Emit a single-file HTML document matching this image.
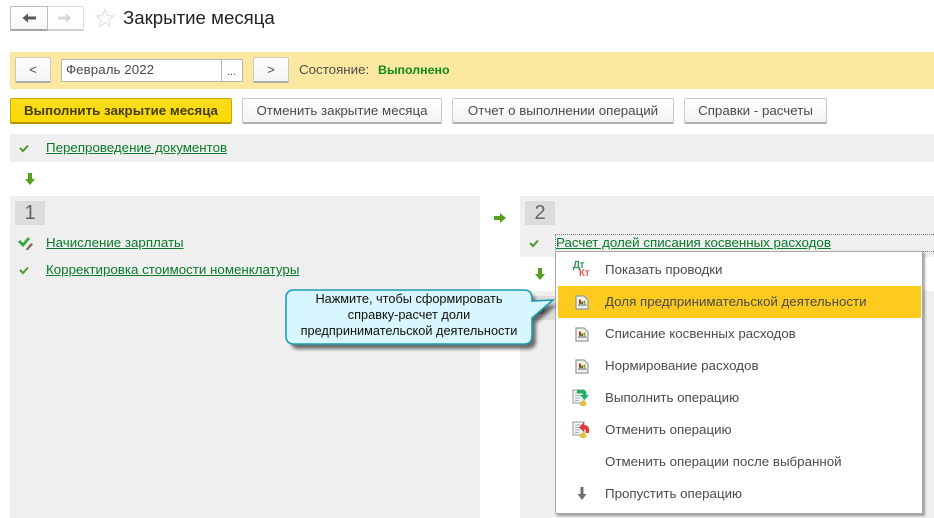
<!DOCTYPE html>
<html lang="ru"><head><meta charset="utf-8"><style>
html,body{margin:0;padding:0;background:#fff}
#p{position:relative;width:934px;height:518px;overflow:hidden;font-family:"Liberation Sans",Arial,sans-serif;font-size:13.33px;color:#4b4b4b;background:#fff}
#p div,#p svg,#p a{position:absolute;box-sizing:border-box}
.t{white-space:nowrap;line-height:16px}
.g{background:#efefef}
.btn{background:linear-gradient(#fff,#f3f3f3);border:1px solid #c8c8c8;border-bottom:2px solid #b0b0b0;border-radius:2px;text-align:center;white-space:nowrap;line-height:24px;color:#4b4b4b}
.l{color:#0a7a2c;text-decoration:underline;white-space:nowrap;line-height:16px}
.m{left:605px;white-space:nowrap;line-height:16px;color:#4b4b4b}
</style></head><body><div id="p">

<div style="left:10px;top:6px;width:74px;height:25px;border:1px solid #dcdcdc;border-bottom:2px solid #d0d0d0;border-radius:2px;background:#fff"></div>
<div style="left:10px;top:6px;width:38px;height:25px;border:1px solid #bdbdbd;border-bottom:2px solid #a5a5a5;border-radius:2px 0 0 2px;background:linear-gradient(#fff,#f6f6f6)"></div>
<svg style="left:21px;top:12px" width="16" height="12"><path d="M1.500 6L7 1.500V4.500H15V7.500H7V10.500Z" fill="#585858"/></svg>
<svg style="left:57px;top:12px" width="16" height="12"><path d="M14.500 6L9 1.500V4.500H1V7.500H9V10.500Z" fill="#d8d8d8"/></svg>
<svg style="left:95px;top:8px" width="20" height="20"><path d="M10 1.500L12.400 7.600L18.600 8L13.800 12.100L15.400 18.400L10 15L4.600 18.400L6.200 12.100L1.400 8L7.600 7.600Z" fill="#fff" stroke="#e2e2e2" stroke-width="1.200"/></svg>
<div class="t" style="left:123px;top:8px;font-size:18.67px;line-height:20px;color:#222">Закрытие месяца</div>

<div style="left:10px;top:52px;width:924px;height:37px;background:#fce8a0"></div>
<div class="btn" style="left:15px;top:57px;width:36px;height:26px">&lt;</div>
<div style="left:61px;top:59px;width:182px;height:23px;background:#fff;border:1px solid #b5b5b5;border-radius:2px"></div>
<div style="left:221px;top:59px;width:1px;height:23px;background:#b5b5b5"></div>
<div class="t" style="left:66px;top:62px;letter-spacing:.05px">Февраль 2022</div>
<div class="t" style="left:227px;top:64px;font-size:11px">...</div>
<div class="btn" style="left:253px;top:57px;width:36px;height:26px">&gt;</div>
<div class="t" style="left:299px;top:62px">Состояние:</div>
<div class="t" style="left:378px;top:62px;font-weight:bold;color:#108a1c;font-size:12.4px">Выполнено</div>

<div class="btn" style="left:10px;top:98px;width:222px;height:26px;background:linear-gradient(#f9dc1e,#fbd900);border-color:#c9a800;border-bottom-color:#b39600;font-weight:bold;color:#443d10">Выполнить закрытие месяца</div>
<div class="btn" style="left:242px;top:98px;width:200px;height:26px">Отменить закрытие месяца</div>
<div class="btn" style="left:452px;top:98px;width:222px;height:26px">Отчет о выполнении операций</div>
<div class="btn" style="left:684px;top:98px;width:143px;height:26px">Справки - расчеты</div>

<div class="g" style="left:10px;top:134px;width:924px;height:28px"></div>
<svg style="left:19px;top:144px" width="10" height="9"><path d="M1 4L4 7L9 1.500" fill="none" stroke="#4f9a2a" stroke-width="2"/></svg>
<a class="l" style="left:46px;top:140px">Перепроведение документов</a>
<svg style="left:24px;top:172px" width="12" height="14"><path d="M4 1H8V7H11L6 13L1 7H4Z" fill="#55a11f"/></svg>

<div class="g" style="left:10px;top:196px;width:470px;height:322px"></div>
<div style="left:15px;top:201px;width:30px;height:24px;background:#dcdcdc;color:#666;font-size:20px;line-height:24px;text-align:center">1</div>
<svg style="left:18px;top:236px" width="16" height="14"><path d="M1 5L5 9L11 2" fill="none" stroke="#2fa83a" stroke-width="2.800"/><path d="M8 13L13 7L15 8.500L10 14H8Z" fill="#8a6a50"/></svg>
<a class="l" style="left:46px;top:235px">Начисление зарплаты</a>
<svg style="left:19px;top:266px" width="10" height="9"><path d="M1 4L4 7L9 1.500" fill="none" stroke="#4f9a2a" stroke-width="2"/></svg>
<a class="l" style="left:46px;top:262px">Корректировка стоимости номенклатуры</a>

<svg style="left:493px;top:212px" width="14" height="12"><path d="M1 4H7V1L13 6L7 11V8H1Z" fill="#55a11f"/></svg>
<div class="g" style="left:520px;top:196px;width:414px;height:61px"></div>
<div style="left:525px;top:201px;width:30px;height:24px;background:#dcdcdc;color:#666;font-size:20px;line-height:24px;text-align:center">2</div>
<svg style="left:529px;top:239px" width="10" height="9"><path d="M1 4L4 7L9 1.500" fill="none" stroke="#4f9a2a" stroke-width="2"/></svg>
<div style="left:555px;top:234px;width:379px;height:18px;border:1px dotted #777;border-right:0"></div>
<a class="l" style="left:556px;top:235px">Расчет долей списания косвенных расходов</a>
<svg style="left:534px;top:267px" width="12" height="14"><path d="M4 1H8V7H11L6 13L1 7H4Z" fill="#55a11f"/></svg>
<div class="g" style="left:520px;top:291px;width:414px;height:227px"></div>
<div style="left:525px;top:296px;width:30px;height:24px;background:#dcdcdc;color:#666;font-size:20px;line-height:24px;text-align:center">3</div>

<div style="left:555px;top:251px;width:368px;height:263px;background:#fff;border:1px solid #a8a8a8;box-shadow:2px 2px 2px rgba(0,0,0,.35)"></div>
<div style="left:558px;top:286px;width:363px;height:32px;background:#fccb1e"></div>

<div class="t" style="left:573px;top:261px;font-size:10px;line-height:10px;color:#1e8a4a;-webkit-text-stroke:.3px #1e8a4a">Дт</div>
<div class="t" style="left:579px;top:269px;font-size:10px;line-height:10px;color:#e8534a;-webkit-text-stroke:.3px #e8534a">Кт</div>
<div class="m" style="top:262px">Показать проводки</div>

<svg style="left:575px;top:295px" width="14" height="15"><path d="M1 1H9L13 5V14H1Z" fill="#f2f2ea" stroke="#8f9a9f" stroke-width="1.200"/><path d="M4 4.500h2v4.500H4z" fill="#d93030"/><path d="M6 6.500h2v2.500H6z" fill="#2a9a35"/><path d="M8.500 5.500h1.800v3.500H8.500z" fill="#b8902a"/><path d="M3 9.500h8.500v1H3z" fill="#555"/></svg>
<div class="m" style="top:294px">Доля предпринимательской деятельности</div>

<svg style="left:575px;top:327px" width="14" height="15"><path d="M1 1H9L13 5V14H1Z" fill="#f2f2ea" stroke="#8f9a9f" stroke-width="1.200"/><path d="M4 4.500h2v4.500H4z" fill="#d93030"/><path d="M6 6.500h2v2.500H6z" fill="#2a9a35"/><path d="M8.500 5.500h1.800v3.500H8.500z" fill="#b8902a"/><path d="M3 9.500h8.500v1H3z" fill="#555"/></svg>
<div class="m" style="top:326px">Списание косвенных расходов</div>

<svg style="left:575px;top:359px" width="14" height="15"><path d="M1 1H9L13 5V14H1Z" fill="#f2f2ea" stroke="#8f9a9f" stroke-width="1.200"/><path d="M4 4.500h2v4.500H4z" fill="#d93030"/><path d="M6 6.500h2v2.500H6z" fill="#2a9a35"/><path d="M8.500 5.500h1.800v3.500H8.500z" fill="#b8902a"/><path d="M3 9.500h8.500v1H3z" fill="#555"/></svg>
<div class="m" style="top:358px">Нормирование расходов</div>

<svg style="left:572px;top:389px" width="18" height="18"><path d="M1 1H12V14H1Z" fill="#f2f5f7" stroke="#8a9aa5"/><path d="M3 4H9M3 6.500H9M3 9H8M3 11.500H7" stroke="#9db0bc"/><path d="M5 1H12C14 1 14.500 3 14.500 6H17L12.500 11L8 6H10.500V4.500H5Z" fill="#22b060"/><ellipse cx="11" cy="14.500" rx="3.500" ry="2.800" fill="#e5c040"/></svg>
<div class="m" style="top:390px">Выполнить операцию</div>

<svg style="left:572px;top:421px" width="18" height="18"><path d="M1 1H12V14H1Z" fill="#f2f5f7" stroke="#8a9aa5"/><path d="M3 4H9M3 6.500H9M3 9H8M3 11.500H7" stroke="#9db0bc"/><path d="M7 6.500L12 1V4C16 4 18 7 17 12H13.500C14 9.500 13.500 8 12 8V11Z" fill="#e23a3a"/><ellipse cx="11" cy="14.500" rx="3.500" ry="2.800" fill="#e5c040"/></svg>
<div class="m" style="top:422px">Отменить операцию</div>

<div class="m" style="top:454px">Отменить операции после выбранной</div>

<svg style="left:576px;top:486px" width="12" height="15"><path d="M4.500 1H7.500V8H10.500L6 14L1.500 8H4.500Z" fill="#6e6e6e"/></svg>
<div class="m" style="top:486px">Пропустить операцию</div>

<svg style="left:280px;top:284px" width="282" height="70"><defs><filter id="s" x="-10%" y="-20%" width="120%" height="140%"><feGaussianBlur stdDeviation="1.800"/></filter></defs>
<path d="M14 7H244Q252 7 252 15V18L273 17L252 35V53Q252 61 244 61H14Q7 61 7 53V15Q7 7 14 7Z" fill="#333" opacity=".7" transform="translate(4 4)" filter="url(#s)"/>
<path d="M14 6H244Q252 6 252 14V17L273 16L252 34V52Q252 60 244 60H14Q6 60 6 52V14Q6 6 14 6Z" fill="#d8f6fd" stroke="#1b9cb6" stroke-width="1.600"/></svg>
<div class="t" style="left:286px;top:291px;width:246px;text-align:center;color:#111;font-size:12.75px;line-height:16px;white-space:nowrap">Нажмите, чтобы сформировать<br>справку-расчет доли<br>предпринимательской деятельности</div>

</div></body></html>
